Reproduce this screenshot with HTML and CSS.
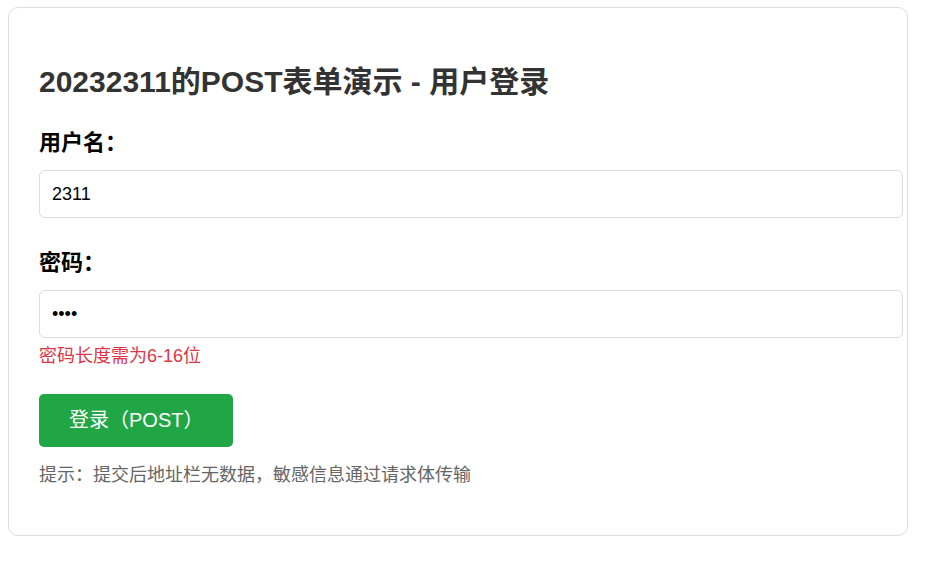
FILE: index.html
```html
<!DOCTYPE html>
<html lang="zh-CN">
<head>
<meta charset="utf-8">
<title>POST表单演示</title>
<link rel="stylesheet" href="styles.css">
</head>
<body>
<div class="card">
  <h2 class="title">20232311的POST表单演示 - 用户登录</h2>
  <form class="login-form" method="post" action="#">
    <div class="form-group">
      <label class="field-label" for="username">用户名：</label>
      <input class="field-input" id="username" name="username" type="text" value="2311">
    </div>
    <div class="form-group">
      <label class="field-label" for="password">密码：</label>
      <input class="field-input" id="password" name="password" type="password" value="1234">
      <div class="field-error">密码长度需为6-16位</div>
    </div>
    <button class="submit-btn" type="submit">登录（POST）</button>
  </form>
  <p class="hint">提示：提交后地址栏无数据，敏感信息通过请求体传输</p>
</div>
</body>
</html>
```

FILE: styles.css
```css
html, body {
  background: #ffffff;
}

body {
  margin: 7px 8px;
  font-family: "Liberation Sans", "Noto Sans CJK SC", sans-serif;
  color: #000;
}

.card {
  width: 900px;
  box-sizing: border-box;
  border: 1px solid #dddddd;
  border-radius: 10px;
  padding: 30px;
  background: #fff;
}

.title {
  margin: 26px 0 29px;
  font-size: 30px;
  line-height: 36px;
  font-weight: bold;
  color: #333333;
}

.login-form {
  display: flex;
  flex-direction: column;
  align-items: flex-start;
}

.form-group {
  align-self: stretch;
  margin-bottom: 31px;
}

.form-group:last-of-type {
  margin-bottom: 26px;
}

.field-label {
  display: block;
  font-size: 22px;
  line-height: 28px;
  font-weight: bold;
  margin-bottom: 13px;
  color: #000;
}

.field-input {
  display: block;
  width: 100%;
  box-sizing: content-box;
  padding: 12px;
  margin: 0;
  font-family: "Liberation Sans", "Noto Sans CJK SC", sans-serif;
  font-size: 18px;
  line-height: 22px;
  height: 22px;
  border: 1px solid #dddddd;
  border-radius: 6px;
  color: #000;
  background: #fff;
  outline: none;
}

.field-error {
  margin-top: 6px;
  font-size: 18px;
  line-height: 24px;
  color: #dc3545;
}

.submit-btn {
  padding: 15px 30px;
  font-family: "Liberation Sans", "Noto Sans CJK SC", sans-serif;
  font-size: 20px;
  line-height: 23px;
  color: #ffffff;
  background: #21a646;
  border: none;
  border-radius: 5px;
  cursor: pointer;
}

.hint {
  margin: 16px 0 18px;
  font-size: 18px;
  line-height: 24px;
  color: #666666;
}
```
